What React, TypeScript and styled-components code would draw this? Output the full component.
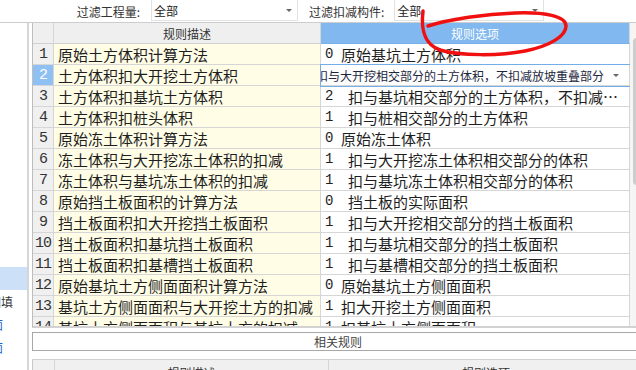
import * as React from 'react';
import styled, { createGlobalStyle } from 'styled-components';

const GlobalStyle = createGlobalStyle`
  html, body {
    margin: 0;
    padding: 0;
    overflow: hidden;
    background: #ffffff;
    font-family: "Noto Sans CJK SC", "Noto Sans", sans-serif;
  }
`;

type Option = { code: string; wide: boolean; text: string };

const rules: { desc: string; opt: Option | null }[] = [
    { desc: '原始土方体积计算方法', opt: { code: '0', wide: false, text: '原始基坑土方体积' } },
    { desc: '土方体积扣大开挖土方体积', opt: null },
    { desc: '土方体积扣基坑土方体积', opt: { code: '2', wide: true, text: '扣与基坑相交部分的土方体积，不扣减…' } },
    { desc: '土方体积扣桩头体积', opt: { code: '1', wide: true, text: '扣与桩相交部分的土方体积' } },
    { desc: '原始冻土体积计算方法', opt: { code: '0', wide: false, text: '原始冻土体积' } },
    { desc: '冻土体积与大开挖冻土体积的扣减', opt: { code: '1', wide: true, text: '扣与大开挖冻土体积相交部分的体积' } },
    { desc: '冻土体积与基坑冻土体积的扣减', opt: { code: '1', wide: true, text: '扣与基坑冻土体积相交部分的体积' } },
    { desc: '原始挡土板面积的计算方法', opt: { code: '0', wide: true, text: '挡土板的实际面积' } },
    { desc: '挡土板面积扣大开挖挡土板面积', opt: { code: '1', wide: true, text: '扣与大开挖相交部分的挡土板面积' } },
    { desc: '挡土板面积扣基坑挡土板面积', opt: { code: '1', wide: true, text: '扣与基坑相交部分的挡土板面积' } },
    { desc: '挡土板面积扣基槽挡土板面积', opt: { code: '1', wide: true, text: '扣与基槽相交部分的挡土板面积' } },
    { desc: '原始基坑土方侧面面积计算方法', opt: { code: '0', wide: false, text: '原始基坑土方侧面面积' } },
    { desc: '基坑土方侧面面积与大开挖土方的扣减', opt: { code: '1', wide: false, text: '扣大开挖土方侧面面积' } },
    { desc: '基坑土方侧面面积与基坑土方的扣减', opt: { code: '1', wide: false, text: '扣基坑土方侧面面积' } },
];

export default function App() {
    return (
        <Page>
            <GlobalStyle />
            <Toolbar>
                <FilterLabel $w={140}>过滤工程量:</FilterLabel>
                <Combo $w={147} $gap={11}>
                    <span>全部</span>
                    <Caret />
                </Combo>
                <FilterLabel $gap={11}>过滤扣减构件:</FilterLabel>
                <Combo $w={150} $gap={10}>
                    <span>全部</span>
                    <Caret />
                </Combo>
            </Toolbar>
            <Body>
                <SidePanel>
                    <SideList>
                        <SideItem $active />
                        <SideItem $pad={14}>房心回填</SideItem>
                        <SideItem $pad={24} $link>侧面</SideItem>
                        <SideItem $pad={24} $link>侧面</SideItem>
                    </SideList>
                </SidePanel>
                <Content>
                    <RuleTable>
                        <GridBody>
                            <Row>
                                <HeadCell />
                                <HeadCell>规则描述</HeadCell>
                                <HeadCell $blue>规则选项</HeadCell>
                            </Row>
                            {rules.map((r, i) => (
                                <Row key={i}>
                                    <NumCell $active={i === 1}>{i + 1}</NumCell>
                                    <DescCell>{r.desc}</DescCell>
                                    {r.opt ? (
                                        <OptCell>
                                            <Code $wide={r.opt.wide}>{r.opt.code}</Code>
                                            <span>{r.opt.text}</span>
                                        </OptCell>
                                    ) : (
                                        <EditCell>
                                            <EditText>扣与大开挖相交部分的土方体积，不扣减放坡重叠部分</EditText>
                                            <Caret $right={10} />
                                        </EditCell>
                                    )}
                                </Row>
                            ))}
                        </GridBody>
                        <ScrollTrack>
                            <ScrollThumb />
                        </ScrollTrack>
                    </RuleTable>
                    <RelatedBar>相关规则</RelatedBar>
                    <SubHead>
                        <SubHeadCell />
                        <SubHeadCell>规则描述</SubHeadCell>
                        <SubHeadCell>规则选项</SubHeadCell>
                    </SubHead>
                </Content>
            </Body>
            <Annotation viewBox="0 0 636 370" width="636" height="370">
                <path
                    d="M423,11 C421,28 423,44 440,50 C460,56 500,56 525,51 C550,46 566,36 566,26 C566,16 545,12 515,13 C485,14 450,19 428,26"
                    fill="none"
                    stroke="#f01010"
                    strokeWidth="3.5"
                    strokeLinecap="round"
                />
            </Annotation>
        </Page>
    );
}

const Page = styled.div`
    width: 636px;
    height: 370px;
    overflow: hidden;
    color: #222;
`;

const Toolbar = styled.div`
    display: flex;
    height: 22px;
    border-bottom: 1px solid #cdcdcd;
    box-sizing: content-box;
`;

const FilterLabel = styled.div<{ $w?: number; $gap?: number }>`
    display: flex;
    align-items: center;
    justify-content: flex-end;
    width: ${(p) => (p.$w ? `${p.$w}px` : 'auto')};
    margin-left: ${(p) => p.$gap || 0}px;
    font-size: 12px;
    color: #333;
    white-space: nowrap;
`;

const Combo = styled.div<{ $w: number; $gap: number }>`
    display: flex;
    align-items: center;
    width: ${(p) => p.$w}px;
    height: 21px;
    margin-left: ${(p) => p.$gap}px;
    padding-left: 2px;
    box-sizing: border-box;
    border: 1px solid #e2e2e2;
    border-top: none;
    font-size: 12px;
    color: #222;

    span {
        flex: 1;
    }
`;

const Caret = styled.i<{ $right?: number }>`
    width: 0;
    height: 0;
    margin-right: ${(p) => p.$right ?? 5}px;
    border-left: 3px solid transparent;
    border-right: 3px solid transparent;
    border-top: 3px solid #666;
`;

const Body = styled.div`
    display: flex;
    height: 347px;
`;

const SidePanel = styled.div`
    width: 27px;
    flex: none;
    border-right: 2px solid #d6d6d6;
    overflow: hidden;
`;

const SideList = styled.div`
    padding-top: 244px;
`;

const SideItem = styled.div<{ $active?: boolean; $pad?: number; $link?: boolean }>`
    display: flex;
    justify-content: flex-end;
    align-items: center;
    height: 23px;
    padding-right: ${(p) => p.$pad || 0}px;
    background: ${(p) => (p.$active ? '#cce1f8' : 'transparent')};
    color: ${(p) => (p.$link ? '#1a5fd0' : '#333')};
    font-size: 12px;
    white-space: nowrap;
    overflow: hidden;
`;

const Content = styled.div`
    width: 612px;
    flex: none;
    margin-left: 3px;
`;

const RuleTable = styled.div`
    display: flex;
    height: 305px;
    box-sizing: border-box;
    border-left: 1px solid #bdbdbd;
    border-bottom: 2px solid #d2d2d2;
    overflow: hidden;
`;

const GridBody = styled.div`
    width: 597px;
    flex: none;
    overflow: hidden;
`;

const Row = styled.div`
    display: grid;
    grid-template-columns: 21px 267px 309px;
    height: 21px;
`;

const Cell = styled.div`
    display: flex;
    align-items: center;
    box-sizing: border-box;
    border-right: 1px solid #d6d6d6;
    border-bottom: 1px solid #d6d6d6;
    overflow: hidden;
    white-space: nowrap;
`;

const HeadCell = styled(Cell)<{ $blue?: boolean }>`
    justify-content: center;
    font-size: 12px;
    background: ${(p) => (p.$blue ? '#80b8ef' : '#efefef')};
    color: ${(p) => (p.$blue ? '#ffffff' : '#333')};
    border-bottom-color: ${(p) => (p.$blue ? '#7aaee4' : '#d0d0d0')};
`;

const NumCell = styled(Cell)<{ $active?: boolean }>`
    justify-content: center;
    background: ${(p) => (p.$active ? '#8fc0f3' : '#f0f0f0')};
    color: ${(p) => (p.$active ? '#ffffff' : '#333')};
    font-family: "Liberation Mono", monospace;
    font-size: 15px;
    letter-spacing: -1px;
`;

const DescCell = styled(Cell)`
    padding-left: 4px;
    background: #fffde6;
    font-size: 15px;
    color: #1e1e1e;
`;

const OptCell = styled(Cell)`
    padding-left: 4px;
    background: #ffffff;
    font-size: 15px;
    color: #1e1e1e;
`;

const Code = styled.span<{ $wide: boolean }>`
    width: ${(p) => (p.$wide ? 23 : 16)}px;
    flex: none;
    font-family: "Liberation Mono", monospace;
    font-size: 14px;
`;

const EditCell = styled(Cell)`
    position: relative;
    z-index: 1;
    background: #ffffff;
    outline: 1px solid #74aee8;
`;

const EditText = styled.span`
    flex: 1;
    margin-left: -5px;
    overflow: hidden;
    font-size: 12px;
    color: #1d2740;
`;

const ScrollTrack = styled.div`
    width: 14px;
    flex: none;
    background: #f5f5f5;
`;

const ScrollThumb = styled.div`
    width: 8px;
    height: 147px;
    margin: 15px 0 0 3px;
    border-radius: 4px;
    background: #cdcdcd;
`;

const RelatedBar = styled.div`
    display: flex;
    align-items: center;
    justify-content: center;
    height: 19px;
    margin-top: 4px;
    box-sizing: border-box;
    border: 1px solid #a8a8a8;
    font-size: 12px;
    color: #444;
`;

const SubHead = styled.div`
    display: grid;
    grid-template-columns: 22px 274px 1fr;
    height: 24px;
    margin-top: 8px;
    border-top: 1px solid #d0d0d0;
    border-left: 1px solid #c8c8c8;
`;

const SubHeadCell = styled.div`
    display: flex;
    align-items: center;
    justify-content: center;
    border-right: 1px solid #d6d6d6;
    background: #f0f0f0;
    font-size: 12px;
    color: #333;
`;

const Annotation = styled.svg`
    position: fixed;
    left: 0;
    top: 0;
    pointer-events: none;
    z-index: 10;
`;
